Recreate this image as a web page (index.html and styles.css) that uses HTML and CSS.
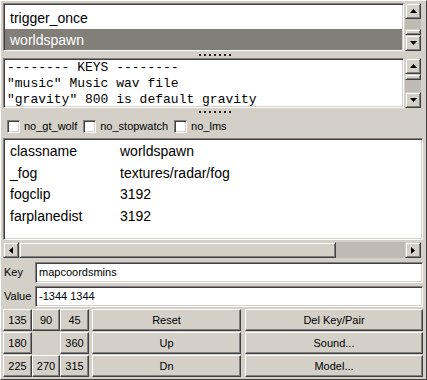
FILE: index.html
```html
<!DOCTYPE html>
<html lang="en">
<head>
    <meta charset="UTF-8">
    <title>Entity</title>
    <link rel="stylesheet" href="styles.css">
</head>
<body>

    <div class="app">

        <!-- Lista de classes -->
        <div class="pane pane-top">
            <div class="list sunken">
                <div class="item">trigger_once</div>
                <div class="item selected">worldspawn</div>
            </div>
            <div class="vscroll">
                <div class="sbtn"><svg width="7" height="4"><path d="M3.5 0 L7 4 L0 4 Z" fill="#000"/></svg></div>
                <div class="track"></div>
                <div class="thumb"></div>
                <div class="sbtn"><svg width="7" height="4"><path d="M0 0 L7 0 L3.5 4 Z" fill="#000"/></svg></div>
            </div>
        </div>

        <div class="splitter">
            <svg width="32" height="2"><g fill="#222"><rect x="0" width="2" height="2"/><rect x="5" width="2" height="2"/><rect x="10" width="2" height="2"/><rect x="15" width="2" height="2"/><rect x="20" width="2" height="2"/><rect x="25" width="2" height="2"/><rect x="30" width="2" height="2"/></g></svg>
        </div>

        <!-- Comentario da entidade -->
        <div class="pane pane-keys">
            <div class="keys sunken">-------- KEYS --------
"music" Music wav file
"gravity" 800 is default gravity</div>
            <div class="vscroll">
                <div class="sbtn"><svg width="7" height="4"><path d="M3.5 0 L7 4 L0 4 Z" fill="#000"/></svg></div>
                <div class="thumb"></div>
                <div class="track"></div>
                <div class="sbtn"><svg width="7" height="4"><path d="M0 0 L7 0 L3.5 4 Z" fill="#000"/></svg></div>
            </div>
        </div>

        <div class="splitter">
            <svg width="32" height="2"><g fill="#222"><rect x="0" width="2" height="2"/><rect x="5" width="2" height="2"/><rect x="10" width="2" height="2"/><rect x="15" width="2" height="2"/><rect x="20" width="2" height="2"/><rect x="25" width="2" height="2"/><rect x="30" width="2" height="2"/></g></svg>
        </div>

        <!-- Flags -->
        <div class="flags">
            <span class="check"></span><span class="flag">no_gt_wolf</span>
            <span class="check"></span><span class="flag">no_stopwatch</span>
            <span class="check"></span><span class="flag">no_lms</span>
        </div>

        <!-- Pares chave/valor -->
        <div class="props sunken">
            <div class="prop"><span class="pkey">classname</span><span>worldspawn</span></div>
            <div class="prop"><span class="pkey">_fog</span><span>textures/radar/fog</span></div>
            <div class="prop"><span class="pkey">fogclip</span><span>3192</span></div>
            <div class="prop"><span class="pkey">farplanedist</span><span>3192</span></div>
        </div>

        <div class="hscroll">
            <div class="sbtn"><svg width="4" height="7"><path d="M0 3.5 L4 0 L4 7 Z" fill="#000"/></svg></div>
            <div class="hthumb"></div>
            <div class="htrack"></div>
            <div class="sbtn"><svg width="4" height="7"><path d="M0 0 L4 3.5 L0 7 Z" fill="#000"/></svg></div>
        </div>

        <div class="field">
            <label class="field-label">Key</label>
            <div class="input sunken">mapcoordsmins</div>
        </div>
        <div class="field field-value">
            <label class="field-label">Value</label>
            <div class="input sunken">-1344 1344</div>
        </div>

        <!-- Botoes -->
        <div class="buttons">
            <div class="dirs">
                <div class="btn">135</div>
                <div class="btn">90</div>
                <div class="btn">45</div>
                <div class="btn">180</div>
                <div></div>
                <div class="btn">360</div>
                <div class="btn">225</div>
                <div class="btn">270</div>
                <div class="btn">315</div>
            </div>
            <div class="actions">
                <div class="btn">Reset</div>
                <div class="btn">Del Key/Pair</div>
                <div class="btn">Up</div>
                <div class="btn">Sound...</div>
                <div class="btn">Dn</div>
                <div class="btn">Model...</div>
            </div>
        </div>

    </div>

</body>
</html>
```

FILE: styles.css
```css
/* Janela de entidade, estilo Windows classico */
body {
    margin: 0;
    padding: 0;
    background-color: #d4d0c8;
}

.app {
    width: 427px;
    height: 380px;
    box-sizing: border-box;
    border: 1px solid;
    border-color: #ffffff #404040 #404040 #ffffff;
    padding: 2px 3px 2px 2px;
    background-color: #d4d0c8;
    font-family: "Liberation Sans", Arial, sans-serif;
    color: #000;
    display: flex;
    flex-direction: column;
    overflow: hidden;
}

.sunken {
    box-sizing: border-box;
    background-color: #fff;
    border: 1px solid;
    border-color: #808080 #ffffff #ffffff #808080;
    box-shadow: inset 1px 1px 0 #404040, inset -1px -1px 0 #d4d0c8;
}

.pane {
    display: flex;
    gap: 1px;
}

.pane-top {
    height: 48px;
}

.pane-keys {
    height: 50px;
}

.list {
    flex: 1;
    padding: 3px 1px 0;
    overflow: hidden;
    font-size: 14px;
}

.item {
    height: 22px;
    line-height: 22px;
    padding-left: 5px;
}

.item.selected {
    background-color: #827f78;
    color: #fff;
}

.keys {
    flex: 1;
    padding: 1px 3px;
    overflow: hidden;
    white-space: pre;
    font-family: "Liberation Mono", "Courier New", monospace;
    font-size: 13px;
    line-height: 16px;
}

.vscroll {
    width: 16px;
    margin-right: 2px;
    display: flex;
    flex-direction: column;
}

.sbtn {
    box-sizing: border-box;
    width: 16px;
    height: 16px;
    flex: none;
    background-color: #d4d0c8;
    border: 1px solid;
    border-color: #d4d0c8 #404040 #404040 #d4d0c8;
    box-shadow: inset 1px 1px 0 #fff, inset -1px -1px 0 #808080;
    display: flex;
    align-items: center;
    justify-content: center;
}

.track {
    flex: 1;
    background-color: #bfbbb3;
}

.thumb {
    box-sizing: border-box;
    height: 6px;
    background-color: #d4d0c8;
    border: 1px solid;
    border-color: #d4d0c8 #404040 #404040 #d4d0c8;
    box-shadow: inset 1px 1px 0 #fff, inset -1px -1px 0 #808080;
}

.splitter {
    height: 7px;
    display: flex;
    align-items: center;
    justify-content: center;
    padding-left: 4px;
}

.splitter svg {
    display: block;
}

.flags {
    height: 22px;
    display: flex;
    align-items: center;
    padding-left: 4px;
    font-size: 11px;
}

.check {
    box-sizing: border-box;
    width: 13px;
    height: 13px;
    background-color: #fff;
    border: 1px solid;
    border-color: #808080 #ffffff #ffffff #808080;
    box-shadow: inset 1px 1px 0 #404040, inset -1px -1px 0 #d4d0c8;
    margin-right: 4px;
}

.flag {
    margin-right: 6px;
}

.props {
    height: 102px;
    margin-top: 1px;
    padding: 2px 1px 0 6px;
    font-size: 14px;
    overflow: hidden;
}

.prop {
    display: flex;
    height: 21.5px;
    line-height: 21.5px;
}

.pkey {
    width: 110px;
}

.hscroll {
    height: 16px;
    margin: 2px 2px 0 0;
    display: flex;
}

.hthumb {
    flex: 1;
    box-sizing: border-box;
    background-color: #d4d0c8;
    border: 1px solid;
    border-color: #d4d0c8 #404040 #404040 #d4d0c8;
    box-shadow: inset 1px 1px 0 #fff, inset -1px -1px 0 #808080;
}

.htrack {
    width: 69px;
    background-color: #bfbbb3;
}

.field {
    display: flex;
    height: 21px;
    margin-top: 4px;
    font-size: 11px;
}

.field-value {
    margin-top: 3px;
}

.field-label {
    width: 31px;
    padding-left: 1px;
    line-height: 21px;
}

.input {
    flex: 1;
    padding-left: 3px;
    line-height: 19px;
}

.buttons {
    display: flex;
    gap: 3px;
    margin-top: 2px;
    font-size: 11px;
}

.dirs {
    display: grid;
    grid-template-columns: 29px 28px 29px;
    grid-template-rows: repeat(3, 22px);
    row-gap: 1px;
}

.actions {
    flex: 1;
    display: grid;
    grid-template-columns: 149px 1fr;
    grid-template-rows: repeat(3, 22px);
    column-gap: 4px;
    row-gap: 1px;
}

.btn {
    box-sizing: border-box;
    background-color: #d4d0c8;
    border: 1px solid;
    border-color: #ffffff #404040 #404040 #ffffff;
    box-shadow: inset -1px -1px 0 #808080;
    display: flex;
    align-items: center;
    justify-content: center;
}
```
